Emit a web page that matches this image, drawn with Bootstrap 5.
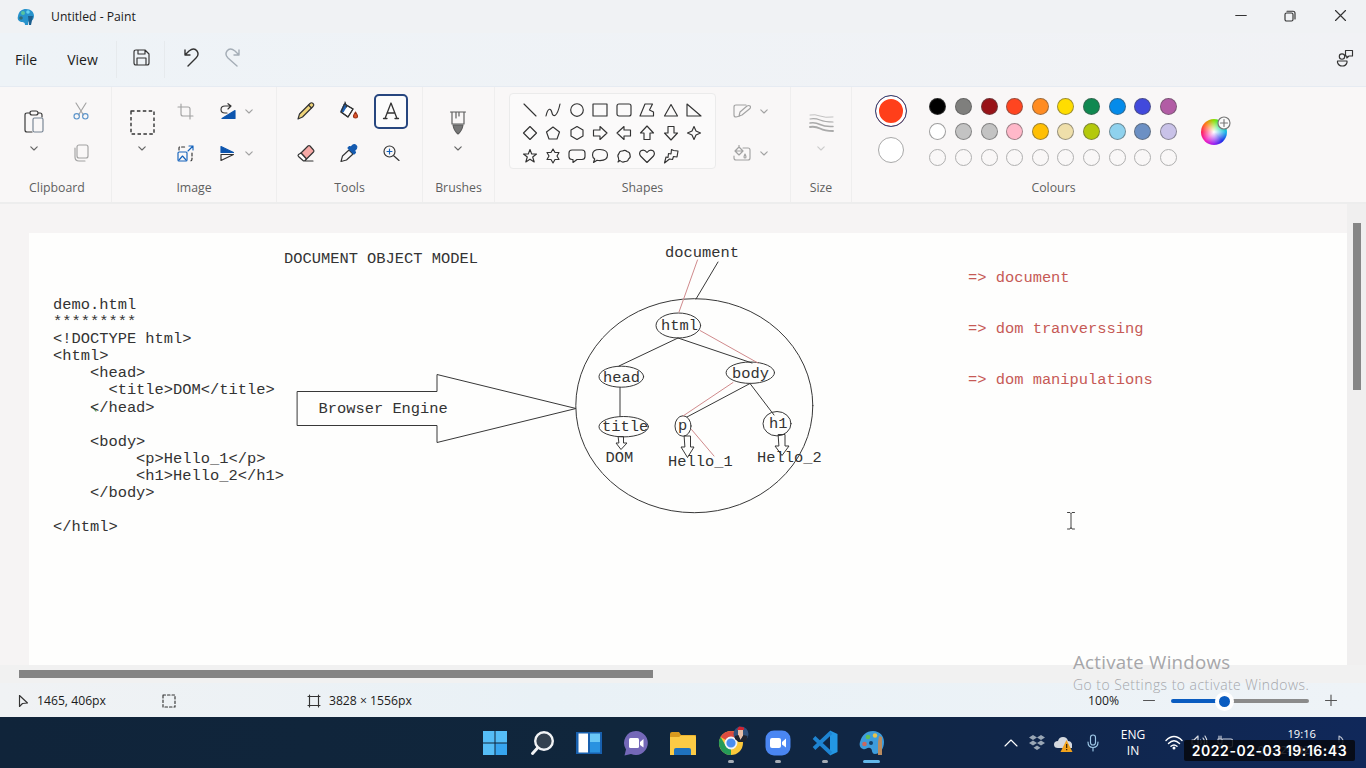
<!DOCTYPE html>
<html lang="en">
<head>
<meta charset="utf-8">
<meta name="viewport" content="width=device-width, initial-scale=1">
<title>Untitled - Paint</title>
<link href="https://cdn.jsdelivr.net/npm/bootstrap@5.3.0/dist/css/bootstrap.min.css" rel="stylesheet">
<style>
body{width:1366px;height:768px;overflow:hidden;font-family:"Open Sans","Noto Sans",sans-serif;font-size:12.2px;color:#1b1b1b;background:#f0f2f4}
svg{display:block;fill:none;stroke:#333;stroke-width:1.15;stroke-linejoin:round;stroke-linecap:round;flex:none}
.titlebar{height:33px;background:#f0f2f4}
.menubar{height:53px;background:linear-gradient(90deg,#eef3f7,#f1f2f5);font-size:14px}
.vsep{width:1px;background:#e6eaed}
.ribbon{height:118px;background:#f9f7f7;border-top:1px solid #e6ebf2;border-bottom:2px solid #ededed}
.group{border-right:1px solid #efeeee;padding-top:3px}
.group:last-child{border:0}
.tools-area{height:84px}
.caption-text{color:#5f5f5f;height:27px;line-height:28px;text-align:center;font-size:12.3px}
.cells{display:grid;grid-template-rows:42px 42px;place-items:center}
.tall{grid-row:span 2;height:84px;display:flex;flex-direction:column;align-items:center}
.pair{display:flex;align-items:center;justify-content:space-between}
.dim{stroke:#a2a2a2}
.mid{stroke:#666}
.faint{stroke:#ccc}
.fine{stroke-width:1}
.bold-line{stroke-width:1.4}
.active-tool{width:34px;height:35px;border:2px solid #27467f;border-radius:5px;background:#fcfcfc}
.gallery{width:207px;height:76px;margin-top:3px;border:1px solid #ebebeb;border-radius:4px;background:#fbfafa;padding:4px 8px 0 8px;display:grid;grid-template-columns:repeat(8,23.5px);grid-template-rows:repeat(3,23.4px);place-items:center}
.swatches{display:grid;grid-template-columns:repeat(10,25.63px);grid-template-rows:repeat(3,25.6px);place-items:center}
.swatch{width:17px;height:17px;border-radius:50%;border:1px solid rgba(80,80,80,.55)}
.swatch.empty{border-color:#b0b0b0}
.pick1{width:32px;height:32px;border-radius:50%;border:1.5px solid #27467f;background:#ff3f1a;box-shadow:inset 0 0 0 3px #fff}
.pick2{width:26px;height:26px;border-radius:50%;border:1.3px solid #a9a9a9;background:#fff}
.wheel{width:26px;height:26px;border-radius:50%;background:radial-gradient(#fff,rgba(255,255,255,0) 65%),conic-gradient(#8ae000,#00e070 12%,#18b8e8 25%,#2030e8 38%,#9a20f0 50%,#f020c0 62%,#ff2060 75%,#ff7a10 88%,#8ae000)}
.workspace{height:461px;background:#f6f4f4}
.sheet{margin:29px 0 0 29px;width:1318px;height:432px;background:#fefefd}
.listing,.drawing text{font-family:"Liberation Mono",monospace;font-size:15.4px}
.listing{left:24px;top:64px;line-height:17.1px;color:#333;overflow:visible}
.drawing text{stroke:none;fill:#333}
.drawing .note-red{fill:#c65a56}
.drawing .ink{stroke:#383838;stroke-width:1}
.drawing .red{stroke:#d08a8c;stroke-width:1}
.gutter{width:19px;background:#f0efef;padding:19px 0 0 6px}
.vthumb{width:8px;height:167px;background:#868686}
.hscroll{height:18px;background:#f1f1f1;padding:5px 0 0 19px}
.hthumb{width:634px;height:8px;background:#848484}
.statusbar{height:34px;background:linear-gradient(90deg,#f0f2f4,#e9f1f6 40%,#eef3f7);padding-top:1px}
.rail{width:138px;height:4px;border-radius:2px;background:linear-gradient(90deg,#0a5cc0 53px,#8b8b8b 53px)}
.knob{left:44px;top:-7px;width:19px;height:19px;border-radius:50%;background:#0a5cc0;border:4px solid #fff}
.taskbar{height:51px;background:linear-gradient(90deg,#10243a,#10263c 45%,#10264a 75%,#10285a);color:#fff}
.app{width:47.1px;height:51px;display:flex;flex-direction:column;align-items:center;padding-top:13px;position:relative}
.app svg{stroke:none}
.app i{width:6px;height:3px;border-radius:2px;background:#a5acb5;margin-top:4px}
.app i.on{width:17px;background:#62b8ea}
.taskbar .tray{stroke:#fff}
.clock2{font-size:12px;line-height:16px}
.watermark{left:1073px;top:650px;color:#a6a6a9}
.stamp{left:1184px;top:740px;width:171px;height:21px;background:rgba(6,8,14,.86);color:#fff;font:600 14px/21px Inter,sans-serif;letter-spacing:.55px;border-radius:2px;text-align:center;white-space:nowrap}
</style>
</head>
<body class="d-flex flex-column position-relative">
<svg width="0" height="0" class="position-absolute"><defs>
<symbol id="chev" viewBox="0 0 8 5"><path d="M.8.8 4 4 7.2.8"/></symbol>
</defs></svg>

<header class="titlebar d-flex align-items-center flex-shrink-0">
  <svg width="18" height="18" viewBox="0 0 18 18" style="margin-left:17px"><g stroke="none"><path fill="#2793cc" d="M9 1c5 0 8 3 8 7 0 3-2 5-4 5-2 0-2 1-2 4H8c0-3-2-3-4-3C1 13 0 11 1 8c1-5 4-7 8-7Z"/><path fill="#1b5f8e" d="M11 8h5l-2 9h-2Z"/><circle cx="6" cy="5" r="2" fill="#56c4a0"/><circle cx="11" cy="4" r="1.8" fill="#66d2ef"/><circle cx="4" cy="10" r="1.8" fill="#356c72"/></g></svg>
  <span style="margin-left:16px;padding-top:2px">Untitled - Paint</span>
  <div class="d-flex align-items-center ms-auto" style="margin:0 19.500px 2px 0;gap:37.5px">
    <svg class="fine" width="12" height="12" viewBox="0 0 12 12"><path d="M.7 5.500h10.600"/></svg>
    <svg width="12" height="12" viewBox="0 0 12 12"><rect x="1" y="3" width="8" height="8" rx="1.500"/><path d="M3 1.200h6q2 0 2 2V9"/></svg>
    <svg width="13" height="13" viewBox="0 0 13 13"><path d="m1.500 1.500 10 10m0-10-10 10"/></svg>
  </div>
</header>

<nav class="menubar d-flex align-items-center flex-shrink-0">
  <span style="margin-left:15px">File</span><span style="margin-left:30px">View</span>
  <i class="vsep align-self-stretch my-2" style="margin-left:18px"></i>
  <svg width="17" height="17" viewBox="0 0 17 17" style="margin:0 0 4px 16px"><path d="M3 1h9l4 4v9q0 2-2 2H3q-2 0-2-2V3q0-2 2-2Z M5 1v4h7V1 M4 16V9h9v7"/></svg>
  <i class="vsep align-self-stretch my-2" style="margin-left:14px"></i>
  <svg class="bold-line" width="17" height="20" viewBox="0 0 17 20" style="margin:0 0 4px 18px"><path d="M2 2v5h5M2 7l4-4q5-4 8 0 2.500 3.500-1 7L5 18"/></svg>
  <svg class="bold-line" width="17" height="20" viewBox="0 0 17 20" style="margin:0 0 4px 24px;stroke:#a4adb6"><path d="M15 2v5h-5M15 7l-4-4Q6-1 3 3 .5 6.500 4 10l9 8"/></svg>
  <svg width="18" height="18" viewBox="0 0 18 18" class="ms-auto" style="margin-right:12px;margin-bottom:4px"><circle cx="6" cy="7.500" r="2.700"/><path d="M1.500 12h9.500v1.500q-1 3.500-4.700 3.500T1.500 13.500Z M9.500 1.500h7V7H13l-2.200 2V7H9.500Z"/></svg>
</nav>

<section class="ribbon d-flex flex-shrink-0">
  <div class="group" style="width:112px">
    <div class="tools-area cells" style="grid-template-columns:48px 46px;padding-left:10px;justify-content:start">
      <div class="tall" style="padding-top:20px;gap:12px"><svg width="20" height="24" viewBox="0 0 20 24"><path d="M6 3H3Q1 3 1 5v15q0 2 2 2h5M14 3h2q2 0 2 2v2M8 1h4q2 0 2 2t-2 2H8Q6 5 6 3t2-2Z"/><rect x="9" y="8" width="10" height="14" rx="1.500" stroke="#748292"/></svg><svg class="mid" width="8" height="5"><use href="#chev"/></svg></div>
      <svg width="16" height="18" viewBox="0 0 16 18"><path class="dim" d="M3 1l7.500 12M13 1 5.500 13"/><g stroke="#5f96cb"><circle cx="3.700" cy="14.300" r="2.700"/><circle cx="12.300" cy="14.300" r="2.700"/></g></svg>
      <svg class="dim" width="15" height="18" viewBox="0 0 15 18"><rect x="3" y="1" width="11" height="13" rx="2"/><path d="M1 4v9q0 4 4 4h6"/></svg>
    </div><div class="caption-text" style="padding-left:3px">Clipboard</div>
  </div>
  <div class="group" style="width:165px">
    <div class="tools-area cells" style="grid-template-columns:42px 44px 58px;padding-left:9px;justify-content:start">
      <div class="tall" style="padding-top:20px;gap:11px"><svg width="25" height="25" viewBox="0 0 25 25" style="stroke-width:1.400"><path stroke-dasharray="3.500 2.400" stroke-linecap="butt" d="M1 1h23v23H1Z"/></svg><svg class="mid" width="8" height="5"><use href="#chev"/></svg></div>
      <svg class="dim" width="17" height="17" viewBox="0 0 17 17"><path d="M4 1v10q0 2 2 2h10M1 4h10q2 0 2 2v10"/></svg>
      <div class="pair" style="width:34px"><svg width="18" height="17" viewBox="0 0 18 17"><path d="M8 10H6Q2 10 2 6.500T6 3h6M9 .7 12 3 9 6"/><path fill="#0d55ae" stroke="#0d55ae" d="M16 7.500v8H3Z"/></svg><svg class="dim" width="8" height="5"><use href="#chev"/></svg></div>
      <svg width="17" height="17" viewBox="0 0 17 17"><path stroke-dasharray="3 2" d="M2 5V3q0-1 1-1h6M15 8v6q0 2-2 2h-1"/><g stroke="#1462bb"><rect x="1" y="7" width="9" height="9" rx="1"/><path d="m2 15 3.500-4L9 15M11 6l5-5m-4 0h4v4"/></g></svg>
      <div class="pair" style="width:34px"><svg width="17" height="17" viewBox="0 0 17 17"><path fill="#0d55ae" stroke="#0d55ae" d="M2 1.500V7.500h12.500Z"/><path d="M2 9.500h12.500L2 15.500Z"/></svg><svg class="dim" width="8" height="5"><use href="#chev"/></svg></div>
    </div><div class="caption-text">Image</div>
  </div>
  <div class="group" style="width:146px">
    <div class="tools-area cells" style="grid-template-columns:42px 43px 42px;padding-left:8px;justify-content:start">
      <svg width="20" height="20" viewBox="0 0 20 20"><path fill="#efd47a" d="m2 18 1.500-5L14 2.500q1.500-1.500 3 0t0 3L6.500 16Z"/><path d="m12.500 4 3 3"/></svg>
      <svg width="20" height="20" viewBox="0 0 20 20"><path fill="#fff" d="m5.500 3 8.500 5-5 8-7-5Z"/><path fill="#1d61b5" stroke="#1d61b5" d="m5.500 3 2.500 1.500-4 6.500L2 10Z"/><path d="m5.500 3 8.500 5-5 8-7-5ZM6 1l1.500 5"/><path fill="#e1542c" stroke="#963016" d="M16.500 11q-2 3-2 4.500t2 1.500 2-1.500-2-4.500Z"/></svg>
      <div class="active-tool d-flex align-items-center justify-content-center"><svg width="18" height="18" viewBox="0 0 18 18"><path stroke-width="1.300" d="M1.500 16.500H5m8 0h3.500M3 16.500 9 1l6 15.500M5 11h8"/></svg></div>
      <svg width="20" height="20" viewBox="0 0 20 20"><path fill="#f6a9a6" d="m5 10 7-7q1-1 2 0l3.500 4q1 1 0 2l-7 7Z"/><path fill="#fff" d="m5 10 5.500 6-1.500 1.500q-1 1-2 0l-4.500-4q-1-1 0-2ZM8 18h9"/></svg>
      <svg width="20" height="20" viewBox="0 0 20 20"><path d="m10 7 4 4-6.500 6L2 18.500 3.500 13Z"/><path fill="#155bb0" stroke="#155bb0" d="m9 5 6 6 1.500-1.500-1-2 2-2q1-1.500-.5-3t-3-.5l-2 2-1.500-.5Z"/></svg>
      <svg width="18" height="18" viewBox="0 0 18 18"><circle cx="7.500" cy="7.500" r="5.500"/><path d="m12 12 5 4.500"/><path stroke="#1462bb" d="M5 7.500h5M7.500 5v5"/></svg>
    </div><div class="caption-text">Tools</div>
  </div>
  <div class="group" style="width:72px">
    <div class="tools-area tall" style="padding:20px 1px 0 0;gap:10px"><svg width="18" height="26" viewBox="0 0 18 26" style="stroke:#5b5b5b"><path d="M1.500 2h15M3 2v12h12V2M7 2v6m3-6v4"/><path fill="#777" d="M4 15h10q-1 6-5 9-4-3-5-9Z"/></svg><svg class="mid" width="8" height="5"><use href="#chev"/></svg></div>
    <div class="caption-text">Brushes</div>
  </div>
  <div class="group" style="width:296px">
    <div class="tools-area d-flex" style="padding-left:14px">
      <div class="gallery">
        <svg width="16" height="16" viewBox="0 0 16 16"><path d="m2 2 12 12"/></svg>
        <svg width="16" height="16" viewBox="0 0 16 16"><path d="M1 14c2-9 5-8 6-3 1 4 5 5 8-9"/></svg>
        <svg width="16" height="16" viewBox="0 0 16 16"><circle cx="8" cy="8" r="6.300"/></svg>
        <svg width="16" height="16" viewBox="0 0 16 16"><rect x="1" y="2" width="14" height="12"/></svg>
        <svg width="16" height="16" viewBox="0 0 16 16"><rect x="1" y="2" width="14" height="12" rx="2"/></svg>
        <svg width="16" height="16" viewBox="0 0 16 16"><path d="M6 2h7.500l-3 6 4 2v4H1Z"/></svg>
        <svg width="16" height="16" viewBox="0 0 16 16"><path d="M8 2.500 14.500 14h-13Z"/></svg>
        <svg width="16" height="16" viewBox="0 0 16 16"><path d="M1 2v12h14Z"/></svg>
        <svg width="16" height="16" viewBox="0 0 16 16"><path d="m8 1.500 6.500 6.500L8 14.500 1.500 8Z"/></svg>
        <svg width="16" height="16" viewBox="0 0 16 16"><path d="m8 2 6.500 5L12 14H4L1.500 7Z"/></svg>
        <svg width="16" height="16" viewBox="0 0 16 16"><path d="m8 1.500 6 3.500v6l-6 3.500L2 11V5Z"/></svg>
        <svg width="16" height="16" viewBox="0 0 16 16"><path d="M1.500 5H8V1.500L15 8l-7 6.500V11H1.500Z"/></svg>
        <svg width="16" height="16" viewBox="0 0 16 16"><path d="M14.500 5H8V1.500L1 8l7 6.500V11h6.500Z"/></svg>
        <svg width="16" height="16" viewBox="0 0 16 16"><path d="M5 14.500V8H1.500L8 1l6.500 7H11v6.500Z"/></svg>
        <svg width="16" height="16" viewBox="0 0 16 16"><path d="M5 1.500V8H1.500L8 15l6.500-7H11V1.500Z"/></svg>
        <svg width="16" height="16" viewBox="0 0 16 16"><path d="m8 1.500 2 4.500 4.500 2-4.500 2-2 4.500L6 10 1.500 8 6 6Z"/></svg>
        <svg width="16" height="16" viewBox="0 0 16 16"><path d="m8 1.500 1.700 4.500h4.800l-3.800 3 1.500 5L8 11.200 3.800 14l1.500-5-3.800-3h4.800Z"/></svg>
        <svg width="16" height="16" viewBox="0 0 16 16"><path d="m8 1 2 3.500h4L12 8l2 3.500h-4L8 15l-2-3.500H2L4 8 2 4.500h4Z"/></svg>
        <svg width="18" height="16" viewBox="0 0 18 16"><path d="M4 2h10q3 0 3 3v3.500q0 3-3 3H9L5 14.500v-3H4q-3 0-3-3V5q0-3 3-3Z"/></svg>
        <svg width="18" height="16" viewBox="0 0 18 16"><path d="M6 12.200q1.300.4 3 .4 7.500-.3 7.500-5.600T9 1.500 1.500 7q0 2.500 2.200 4L2.500 14.500Z"/></svg>
        <svg width="16" height="16" viewBox="0 0 16 16"><path d="M4 12.500q2 2.500 5 1 3 .3 3.500-2.500 2.500-1.500 1.500-4 0-3-3-3.500-2-2-4.500-.5-3-.3-3.500 2.500-2 2-.5 4.500 0 2 .5 2L2 14Z"/></svg>
        <svg width="18" height="16" viewBox="0 0 18 16"><path d="M9 14.500 2.500 8Q.5 5 3 2.700 6.500 1 9 4.500q2.500-3.500 6-1.800Q17.500 5 15.500 8Z"/></svg>
        <svg width="16" height="16" viewBox="0 0 16 16"><path d="m8.500 1.500 2 1 4.500.5-1 6-3.500-.5-1 3-3-.5L1.500 15 3 9l2 .5.500-4 2.500.500Z"/></svg>
      </div>
      <div class="cells ms-3" style="grid-template-columns:36px">
        <div class="pair" style="width:35px"><svg class="dim" width="18" height="16" viewBox="0 0 18 16"><path d="M13 2H3Q1 2 1 4v8q0 2 2 2l4-1M6 13l1-4 7-6q2-1 3 0t0 2.500L9 12Z"/></svg><svg class="dim" width="8" height="5"><use href="#chev"/></svg></div>
        <div class="pair" style="width:35px"><svg class="dim" width="18" height="16" viewBox="0 0 18 16"><path d="M10 3h5q2 0 2 2v8q0 2-2 2H3q-2 0-2-2v-2M6 2l4 4-4 4-4-4ZM2 6h8M6 0v2M12 9q-2 4 0 4t0-4Z"/></svg><svg class="dim" width="8" height="5"><use href="#chev"/></svg></div>
      </div>
    </div><div class="caption-text">Shapes</div>
  </div>
  <div class="group" style="width:61px">
    <div class="tools-area tall" style="padding-top:23px;gap:11px"><svg width="25" height="22" viewBox="0 0 25 22" style="stroke:#aaa"><path stroke-width=".7" d="M1 2q5-1 10 1t13 1"/><path stroke-width="1.200" d="M1 6q5-1 10 1t13 2"/><path stroke-width="1.500" d="M1 10q5-1 10 1.500t13 2"/><path stroke-width="1.900" d="M1 14q5-1 10 1.500t13 2.500"/></svg><svg class="faint" width="8" height="5"><use href="#chev"/></svg></div>
    <div class="caption-text">Size</div>
  </div>
  <div class="group" style="width:403px">
    <div class="tools-area d-flex">
      <div class="d-flex flex-column align-items-center" style="width:32px;margin:5px 34px 0 23px;gap:10px"><i class="pick1"></i><i class="pick2"></i></div>
      <div class="swatches" style="margin:3.500px 0 0 -16px">
        <i class="swatch" style="background:#000"></i><i class="swatch" style="background:#7f7f7d"></i><i class="swatch" style="background:#981318"></i><i class="swatch" style="background:#ff4520"></i><i class="swatch" style="background:#ff8c22"></i><i class="swatch" style="background:#ffdd00"></i><i class="swatch" style="background:#0f8850"></i><i class="swatch" style="background:#048bea"></i><i class="swatch" style="background:#4149dc"></i><i class="swatch" style="background:#b25ca5"></i>
        <i class="swatch" style="background:#fff"></i><i class="swatch" style="background:#c3c3c3"></i><i class="swatch" style="background:#c3c3c3"></i><i class="swatch" style="background:#ffb8c9"></i><i class="swatch" style="background:#ffbf04"></i><i class="swatch" style="background:#efdfaa"></i><i class="swatch" style="background:#b4c90c"></i><i class="swatch" style="background:#8fd2ee"></i><i class="swatch" style="background:#6c90c4"></i><i class="swatch" style="background:#c9c2e8"></i>
        <i class="swatch empty"></i><i class="swatch empty"></i><i class="swatch empty"></i><i class="swatch empty"></i><i class="swatch empty"></i><i class="swatch empty"></i><i class="swatch empty"></i><i class="swatch empty"></i><i class="swatch empty"></i><i class="swatch empty"></i>
      </div>
      <div class="position-relative" style="margin:29px 0 0 20px;height:26px"><div class="wheel"></div><svg class="position-absolute" style="left:15.500px;top:-3px" width="14" height="14" viewBox="0 0 14 14"><circle cx="7" cy="7" r="6" fill="#fafafa" stroke="#777"/><path stroke="#777" d="M3.500 7h7M7 3.500v7"/></svg></div>
    </div><div class="caption-text">Colours</div>
  </div>
</section>

<main class="workspace d-flex flex-shrink-0">
  <div class="sheet position-relative flex-shrink-0">
<pre class="listing position-absolute m-0">demo.html
*********
&lt;!DOCTYPE html&gt;
&lt;html&gt;
    &lt;head&gt;
      &lt;title&gt;DOM&lt;/title&gt;
    &lt;/head&gt;

    &lt;body&gt;
         &lt;p&gt;Hello_1&lt;/p&gt;
         &lt;h1&gt;Hello_2&lt;/h1&gt;
    &lt;/body&gt;

&lt;/html&gt;</pre>
    <svg class="drawing" width="1318" height="432" viewBox="29 233 1318 432">
      <text x="284" y="263">DOCUMENT OBJECT MODEL</text>
      <path class="ink" d="M297.500 391.500H437V374.500L576 408.500 437 442.500V425.500H297.500Z"/>
      <text x="318.500" y="413">Browser Engine</text>
      <g class="ink">
        <ellipse cx="694.300" cy="405.700" rx="118.500" ry="107"/>
        <ellipse cx="678.300" cy="325.500" rx="22.300" ry="12.500"/>
        <ellipse cx="621.300" cy="376.700" rx="22.300" ry="10.500"/>
        <ellipse cx="623.700" cy="426.700" rx="24.700" ry="10.200"/>
        <ellipse cx="750.300" cy="372.700" rx="24.200" ry="10.700"/>
        <ellipse cx="683" cy="426" rx="8" ry="10.200"/>
        <ellipse cx="777" cy="423.700" rx="14" ry="12.200"/>
        <path d="M718 262 696 299M678 338 619 366M678 338 752 363M620 387.500V416M750 383.500 687 417M750 383.500 774 415"/>
        <path d="M618.500 436.500h5v6.500h3.500l-6 6.500-5-6.500h2.500ZM684.500 436h6v11h3.500l-6.500 10.500-6.500-10.500h3.500ZM778.500 434.500h6.500V446h4l-7 9.500-7-9.500h3.500Z"/>
      </g>
      <path class="red" d="M697.500 260 679 312M700 330.500 758 363M733 382.500 683 416M691.500 429.500 714 456"/>
      <text x="665" y="257">document</text><text x="661" y="330">html</text><text x="603" y="382">head</text>
      <text x="602" y="431">title</text><text x="732" y="378">body</text><text x="678" y="430">p</text><text x="769" y="428">h1</text>
      <text x="605.500" y="462">DOM</text><text x="668" y="466">Hello_1</text><text x="757" y="462">Hello_2</text>
      <text class="note-red" x="968" y="281.500">=&gt; document</text><text class="note-red" x="968" y="333">=&gt; dom tranverssing</text><text class="note-red" x="968" y="384">=&gt; dom manipulations</text>
      <path stroke="#62a068" stroke-width="1.200" d="M93 407.500l3 3.500"/>
      <path stroke="#444" stroke-width="1" d="M1067.500 512.500h2.500l1 1 1-1h2.500M1071 513.500v14M1067.500 529h2.500l1-1.500 1 1.500h2.500"/>
    </svg>
  </div>
  <div class="gutter"><div class="vthumb"></div></div>
</main>
<div class="hscroll flex-shrink-0"><div class="hthumb"></div></div>

<footer class="statusbar d-flex align-items-center flex-shrink-0">
  <svg width="10" height="14" viewBox="0 0 10 14" style="margin-left:18px"><path d="M1.500 1.500v11l3-3 5-.5Z"/></svg>
  <span style="margin-left:9px;padding-top:1px">1465, 406px</span>
  <svg width="14" height="14" viewBox="0 0 14 14" style="margin-left:56px"><path stroke-dasharray="2.500 2" d="M1 1h12v12H1Z"/></svg>
  <svg width="14" height="14" viewBox="0 0 14 14" style="margin-left:131px"><path d="M2.500 1v12m9-12v12M1 2.500h12m-12 9h12"/></svg>
  <span style="margin-left:8px;padding-top:1px">3828 × 1556px</span>
  <div class="d-flex align-items-center ms-auto" style="margin-right:29px">
    <span style="padding-top:1px">100%</span>
    <svg width="12" height="12" viewBox="0 0 12 12" style="margin-left:24px"><path stroke="#555" d="M.5 6.500h11"/></svg>
    <div class="rail position-relative" style="margin:1px 16px 0"><i class="knob position-absolute"></i></div>
    <svg width="12" height="12" viewBox="0 0 12 12"><path stroke="#555" d="M.5 6.500h11M6 1v11"/></svg>
  </div>
</footer>

<div class="taskbar d-flex flex-shrink-0">
  <div class="d-flex" style="margin-left:471.500px">
    <div class="app"><svg width="26" height="26" viewBox="0 0 26 26"><g fill="#55bdf6"><path d="M1 1h11.500v11.500H1ZM13.500 1H25v11.500H13.500ZM1 13.500h11.500V25H1Z"/><path fill="#37a5ef" d="M13.500 13.500H25V25H13.500Z"/></g></svg></div>
    <div class="app"><svg width="26" height="26" viewBox="0 0 26 26"><circle cx="15" cy="11" r="8.800" fill="#34414f" stroke="#f1f3f5" stroke-width="2.400"/><path d="m8.500 18-5 5.500" stroke="#f1f3f5" stroke-width="3"/></svg></div>
    <div class="app"><svg width="26" height="26" viewBox="0 0 26 26"><path fill="#1860ae" d="M0 2h26v22H0Z"/><path fill="#fff" d="M2.500 3.500H12v19H2.500Z"/><path fill="#6ac7f5" d="M14 3.500h10v8.500H14Z"/><path fill="#2a92e0" d="M14 12h10v10.500H14Z"/></svg></div>
    <div class="app"><svg width="26" height="26" viewBox="0 0 26 26"><path fill="#7468b8" d="M13 1a12 12 0 1 1-5 23l-6.500 1.500L3 19.500A12 12 0 0 1 13 1Z"/><rect x="6" y="8" width="10" height="10" rx="1.500" fill="#fff"/><path fill="#fff" d="m17 12 3.500-3v8.500L17 15Z"/></svg></div>
    <div class="app"><svg width="28" height="26" viewBox="0 0 28 26"><path fill="#d99a1e" d="M1 4q0-2 2-2h7l2 3h15v6H1Z"/><path fill="#fccb45" d="M1 7h9l2-1.500h13q2 0 2 2V25H1Z"/><path fill="#1f72bd" d="M5 25v-5q0-2 2-2h13q2 0 2 2v5Z"/></svg></div>
    <div class="app"><svg width="34" height="30" viewBox="0 0 34 30" style="margin-top:-4px;margin-right:-8px"><circle cx="13" cy="17" r="12" fill="#fac83a"/><path fill="#dc4b40" d="M13 17 2.600 11a12 12 0 0 1 20.800 0Z"/><path fill="#259b58" d="M13 17v12A12 12 0 0 1 2.600 11l5 8.500Z"/><circle cx="13" cy="17" r="5.500" fill="#4a8df0" stroke="#f3f5f7" stroke-width="1.800"/><circle cx="23" cy="8" r="7.500" fill="#31517b"/><path fill="#e8bfa8" d="M20 4h5v6l-2.500 4L20 10Z"/><path fill="#d02432" d="m19 4 2-3.500 5 1V4Z"/><path fill="#20242e" d="M17 13v-3l3.500-1 2 5 3-5 4 1-1 4-3 2h-5Z"/></svg><i></i></div>
    <div class="app"><svg width="26" height="26" viewBox="0 0 26 26"><rect x=".5" y=".5" width="25" height="25" rx="8.500" fill="#4a86f2"/><rect x="5" y="8" width="11" height="10" rx="2" fill="#fff"/><path fill="#fff" d="m17 12 4-3.500v9L17 14.500Z"/></svg><i></i></div>
    <div class="app"><svg width="26" height="26" viewBox="0 0 26 26"><path fill="#2397e4" d="m18 .5 7.500 3.500v18L18 25.500Z"/><path fill="none" stroke="#1e84d2" stroke-width="3.800" stroke-linecap="butt" d="M19 2.500 2 18.500M19 23.500 2 7.500"/></svg><i></i></div>
    <div class="app"><svg width="26" height="26" viewBox="0 0 26 26"><path fill="#3d9cdc" d="M14 1c7 0 11 5 11 11 0 7-4 12-9 12-4 0-2-5-5-6-3-1-4 2-7 1-3-1-4-4-3-7C3 5 7 1 14 1Z"/><circle cx="9" cy="7" r="2.300" fill="#5ebf58"/><circle cx="16" cy="5.500" r="2.200" fill="#e8c24c"/><circle cx="5.500" cy="14" r="2.300" fill="#c96860"/><circle cx="12" cy="13" r="2" fill="#12406a"/><path fill="#b98b5f" d="m20 6 3 1v18h-4V12Z"/></svg><i class="on"></i></div>
  </div>
  <div class="d-flex ms-auto" style="height:51px;margin-right:20px">
    <svg class="tray" width="14" height="8" viewBox="0 0 14 8" style="margin:22px 0 0"><path d="m1 7 6-6 6 6"/></svg>
    <svg width="18" height="16" viewBox="0 0 18 16" style="margin:18px 0 0 10px"><g stroke="none" fill="#9aa7b5"><path d="m5 0 4 2.500L5 5 1 2.500ZM13 0l4 2.500L13 5 9 2.500ZM5 5.500 9 8l-4 2.500L1 8ZM13 5.500 17 8l-4 2.500L9 8ZM9 10.500l3.500 2.200L9 15l-3.500-2.300Z"/></g></svg>
    <svg width="20" height="18" viewBox="0 0 20 18" style="margin:18px 0 0 8px"><g stroke="none"><path fill="#d5d9df" d="M4 13Q0 13 0 9.500T4 6q1-4 5-4t5 4q3 0 4 3v4Z"/><path fill="#f2a31c" d="m12.500 5 6 12h-12Z"/><path fill="#3d2708" d="M12 9h1.300v4H12Zm0 5h1.300v1.300H12Z"/></g></svg>
    <svg width="12" height="18" viewBox="0 0 12 18" style="margin:17px 0 0 13px;stroke:#9fc9e8"><rect x="3.500" y="1" width="5" height="10" rx="2.500"/><path d="M1 8q0 5.500 5 5.500T11 8M6 13.500V17"/></svg>
    <div class="text-center clock2" style="margin:10px 0 0 19px;width:30px">ENG<br>IN</div>
    <svg class="tray bold-line" width="18" height="15" viewBox="0 0 18 15" style="margin:18px 0 0 17px"><path d="M1 5.500q8-8 16 0M3.500 8.500q5.500-5.500 11 0M6 11.300q3-2.700 6 0"/><circle cx="9" cy="13" r=".8" fill="#fff"/></svg>
    <svg class="tray" width="17" height="14" viewBox="0 0 17 14" style="margin:18px 0 0 8px" opacity=".85"><path d="M1 5h2l4-4v12L3 9H1ZM9.500 5q1.500 2 0 4M12 3q3 4 0 8M14 1q4 6 0 12"/></svg>
    <svg class="tray" width="17" height="14" viewBox="0 0 17 14" style="margin:18px 0 0 9px" opacity=".8"><path d="M6 4h8q1.500 0 1.500 1.500v5Q15.500 12 14 12H5M1 4h4v3q0 2-2 2T1 7ZM2 1v2m2-2v2M3 9v4"/></svg>
    <div class="clock2 text-end text-nowrap" style="margin:9px 0 0 17px;width:65px;font-size:11.200px">19:16<br>03-02-2022</div>
    <svg class="tray" width="14" height="16" viewBox="0 0 14 16" style="margin:17px 0 0 16px" opacity=".7"><path d="M7 2q6 3 3 9l-6 2M7 2v6M1 11q2 3 6 2"/></svg>
  </div>
</div>

<div class="watermark position-absolute text-nowrap"><div style="font-size:18.700px;line-height:24px;letter-spacing:.25px">Activate Windows</div><div style="font-size:13.900px;line-height:22px;letter-spacing:.49px;font-weight:300">Go to Settings to activate Windows.</div></div>
<div class="stamp position-absolute">2022-02-03 19:16:43</div>
<script src="https://cdn.jsdelivr.net/npm/bootstrap@5.3.0/dist/js/bootstrap.bundle.min.js"></script>
</body>
</html>
